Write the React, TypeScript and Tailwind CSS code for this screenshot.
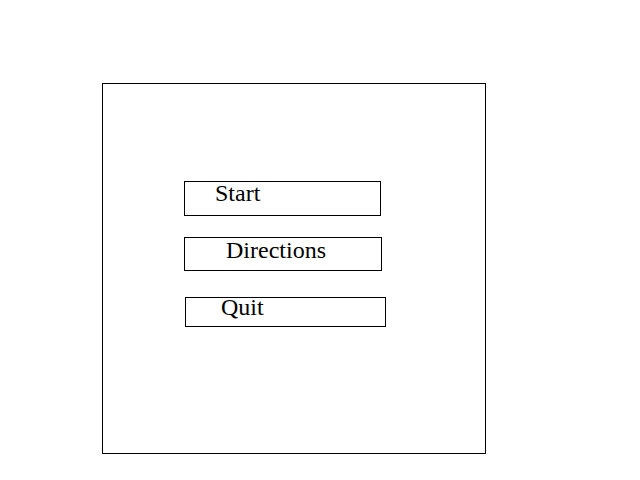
export default function App() {
  return (
    <div className="w-[640px] h-[480px] bg-white pt-[83px] pl-[102px] font-['Liberation_Serif',serif] text-black">
      {/* Menu frame */}
      <div className="w-[384px] h-[371px] border border-black flex flex-col items-start">
        <div className="mt-[97px] ml-[81px] w-[197px] h-[35px] border border-black pl-[30px] text-[24px] leading-[22px]">
          Start
        </div>
        <div className="mt-[21px] ml-[81px] w-[198px] h-[34px] border border-black pl-[41px] pt-px text-[24px] leading-[22px]">
          Directions
        </div>
        <div className="mt-[26px] ml-[82px] w-[201px] h-[30px] border border-black pl-[35px] text-[24px] leading-[18px]">
          Quit
        </div>
      </div>
    </div>
  )
}
